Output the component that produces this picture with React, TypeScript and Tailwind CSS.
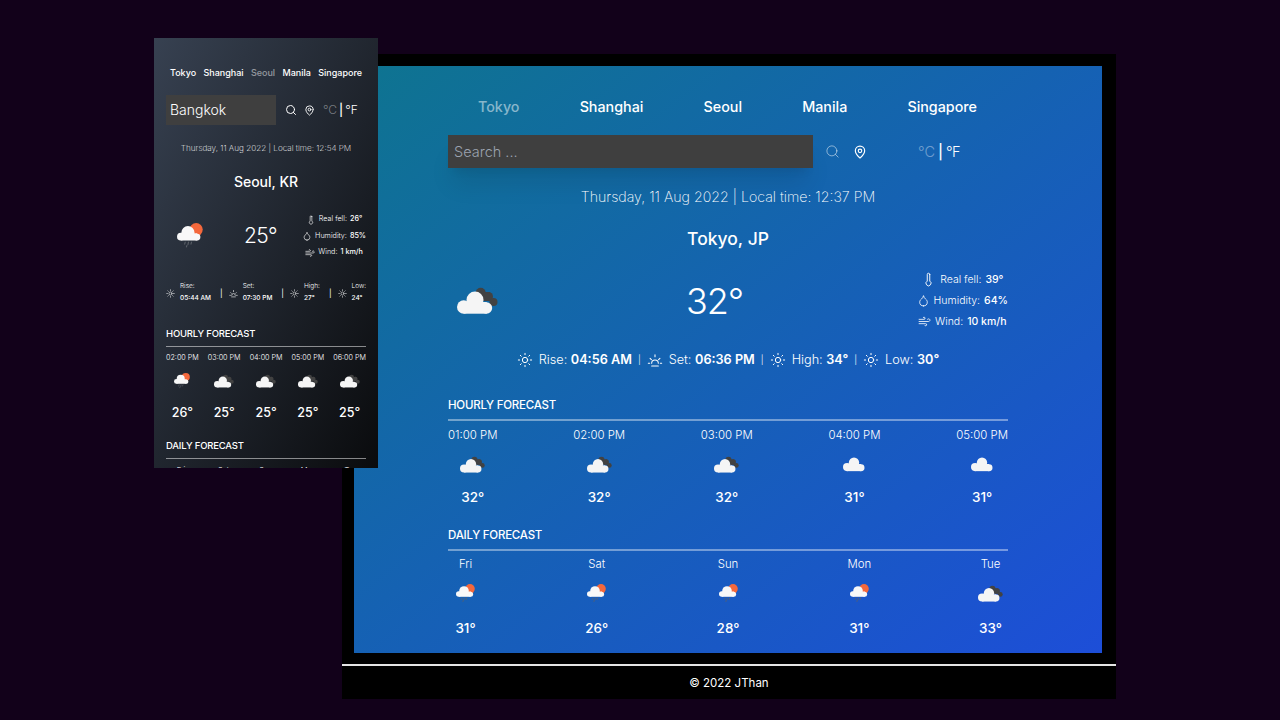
import React from 'react'
import { Search, MapPin, Thermometer, Droplet, Wind, Sun } from 'lucide-react'

function CloudDark({ className, plain }: { className: string; plain?: boolean }) {
    return (
        <svg viewBox={plain ? '0 2 36 26' : '0 0 41 27'} className={className}>
            {!plain && (
                <g fill="#424242">
                    <circle cx="23.7" cy="5.7" r="5" />
                    <circle cx="31.5" cy="9.5" r="4.5" />
                    <circle cx="36.5" cy="15" r="4" />
                    <rect x="24" y="5" width="9" height="9" />
                </g>
            )}
            <g fill="#f5f5f5">
                <circle cx="18" cy="13" r="8.5" />
                <circle cx="6.7" cy="20" r="6.7" />
                <circle cx="29.5" cy="21" r="5.7" />
                <rect x="6.7" y="15" width="23" height="11.7" />
            </g>
        </svg>
    )
}

function CloudSun({ className }: { className: string }) {
    return (
        <svg viewBox="0 0 19 19" className={className}>
            <circle cx="14" cy="4.8" r="4.8" fill="#f4683c" />
            <g fill="#f8f8f8">
                <circle cx="8" cy="7" r="4.8" />
                <circle cx="2.8" cy="10" r="2.8" />
                <circle cx="14.6" cy="10.3" r="2.5" />
                <rect x="2.8" y="7.5" width="12" height="5.3" />
            </g>
            <g stroke="#5b6068" strokeWidth="0.8" strokeLinecap="round">
                <path d="M6 14 5.6 15.4" />
                <path d="M8.4 14 8 15.8" />
                <path d="M10.6 14 10.2 15.4" />
                <path d="M7.2 16.5 6.9 17.5" />
            </g>
        </svg>
    )
}

function SunsetIcon({ className }: { className: string }) {
    return (
        <svg viewBox="0 0 24 24" fill="none" stroke="currentColor" strokeWidth="1.6" strokeLinecap="round" className={className}>
            <path d="M7 17a5 5 0 0 1 10 0" />
            <path d="M12 4v3M4.6 9.6l2 2M19.4 9.6l-2 2M2 17h2M20 17h2M7 21h10" />
        </svg>
    )
}

const hourlyBig = [
    { t: '01:00 PM', v: '32°', kind: 'dark' },
    { t: '02:00 PM', v: '32°', kind: 'dark' },
    { t: '03:00 PM', v: '32°', kind: 'dark' },
    { t: '04:00 PM', v: '31°', kind: 'plain' },
    { t: '05:00 PM', v: '31°', kind: 'plain' },
]
const dailyBig = [
    { t: 'Fri', v: '31°', kind: 'sun' },
    { t: 'Sat', v: '26°', kind: 'sun' },
    { t: 'Sun', v: '28°', kind: 'sun' },
    { t: 'Mon', v: '31°', kind: 'sun' },
    { t: 'Tue', v: '33°', kind: 'dark' },
]
const hourlySmall = [
    { t: '02:00 PM', v: '26°', sun: true },
    { t: '03:00 PM', v: '25°', sun: false },
    { t: '04:00 PM', v: '25°', sun: false },
    { t: '05:00 PM', v: '25°', sun: false },
    { t: '06:00 PM', v: '25°', sun: false },
]
const sunSmall = [
    { label: 'Rise:', v: '05:44 AM', set: false },
    { label: 'Set:', v: '07:30 PM', set: true },
    { label: 'High:', v: '27°', set: false },
    { label: 'Low:', v: '24°', set: false },
]

function BigForecast({ title, items, daily }: { title: string; items: typeof hourlyBig; daily?: boolean }) {
    return (
        <div>
            <div className="h-[18px] flex items-center text-[11.5px] font-medium tracking-[-0.02em] text-white">{title}</div>
            <div className="mt-[4px] h-[2px] bg-white/40" />
            <div className={`${daily ? 'mt-[6px]' : 'mt-[7px]'} flex justify-between text-white`}>
                {items.map((item, i) => (
                    <div key={i} className={`flex flex-col items-center ${daily ? 'w-[35px]' : ''}`}>
                        <div className="h-[16px] flex items-center text-[11.4px] font-light whitespace-nowrap">{item.t}</div>
                        <div className={`mt-[6px] flex items-center justify-center ${daily ? 'h-[28px]' : 'h-[28px]'}`}>
                            {item.kind === 'sun' && <CloudSun className="w-[19px] h-[19px]" />}
                            {item.kind === 'dark' && <CloudDark className="w-[25px] h-[17px]" />}
                            {item.kind === 'plain' && <CloudDark plain className="w-[22px] h-[16px]" />}
                        </div>
                        <div className={`${daily ? 'mt-[11px]' : 'mt-[9px]'} h-[20px] flex items-center text-[13.5px] font-medium`}>{item.v}</div>
                    </div>
                ))}
            </div>
        </div>
    )
}

export default function App() {
    return (
        <div className="relative w-[1280px] h-[720px] overflow-hidden bg-[#12011a] font-['Inter',sans-serif]">
            {/* desktop window */}
            <div className="absolute left-[342px] top-[54px] w-[774px] h-[645px] bg-black flex flex-col">
                <div className="mx-[12px] mt-[12px] h-[587px] w-[748px] px-[94px] pt-[30px] bg-linear-to-br/srgb from-[#0e7490] to-[#1d4ed8] text-white">
                    <div className="flex justify-between pl-[30px] pr-[31px] h-[22px] items-center text-[14.3px] font-medium">
                        <span className="text-white/50">Tokyo</span>
                        <span>Shanghai</span>
                        <span>Seoul</span>
                        <span>Manila</span>
                        <span>Singapore</span>
                    </div>
                    <div className="mt-[17px] h-[33px] flex items-center">
                        <input readOnly placeholder="Search ..." className="w-[365px] h-[33px] px-[6px] bg-[#3f3f3f] text-[14.5px] font-light shadow-xl placeholder:text-[#9ca3af] outline-none" />
                        <Search className="ml-[12px] w-[15px] h-[15px] text-white/50" strokeWidth={1.6} />
                        <MapPin className="ml-[13px] w-[14px] h-[14px]" strokeWidth={2} />
                        <div className="ml-[51px] flex items-center text-[14.5px] font-light">
                            <span className="text-white/40">°C</span>
                            <span className="ml-[3px] mr-[3px] font-medium">|</span>
                            <span className="tracking-[-0.05em]">°F</span>
                        </div>
                    </div>
                    <div className="mt-[17px] h-[24px] flex items-center justify-center text-[14.2px] font-extralight">
                        Thursday, 11 Aug 2022 | Local time: 12:37 PM
                    </div>
                    <div className="mt-[16px] h-[28px] flex items-center justify-center text-[17.5px] font-medium">Tokyo, JP</div>
                    <div className="mt-[16px] h-[63px] flex items-center">
                        <CloudDark className="ml-[9px] w-[41px] h-[27px]" />
                        <div className="ml-[188px] text-[36px] font-light tracking-[-0.03em]">32°</div>
                        <div className="ml-auto flex flex-col items-center text-[10.5px] font-light">
                            <div className="h-[21px] flex items-center gap-[4px]"><Thermometer className="w-[15px] h-[15px]" strokeWidth={1.5} />Real fell: <span className="font-medium">39°</span></div>
                            <div className="h-[21px] flex items-center gap-[4px]"><Droplet className="w-[13px] h-[13px]" strokeWidth={1.5} />Humidity: <span className="font-medium">64%</span></div>
                            <div className="h-[21px] flex items-center gap-[4px]"><Wind className="w-[13px] h-[13px]" strokeWidth={1.5} />Wind: <span className="font-medium">10 km/h</span></div>
                        </div>
                    </div>
                    <div className="mt-[18px] h-[20px] flex items-center justify-center text-[12.7px] font-light">
                        <Sun className="w-[16px] h-[16px] mr-[6px]" strokeWidth={1.5} />Rise:&nbsp;<span className="font-semibold">04:56 AM</span>
                        <span className="mx-[6px] text-[9px]">|</span>
                        <SunsetIcon className="w-[16px] h-[16px] mr-[6px]" />Set:&nbsp;<span className="font-semibold">06:36 PM</span>
                        <span className="mx-[6px] text-[9px]">|</span>
                        <Sun className="w-[16px] h-[16px] mr-[6px]" strokeWidth={1.5} />High:&nbsp;<span className="font-semibold">34°</span>
                        <span className="mx-[6px] text-[9px]">|</span>
                        <Sun className="w-[16px] h-[16px] mr-[6px]" strokeWidth={1.5} />Low:&nbsp;<span className="font-semibold">30°</span>
                    </div>
                    <div className="mt-[27px]">
                        <BigForecast title="HOURLY FORECAST" items={hourlyBig} />
                    </div>
                    <div className="mt-[20px]">
                        <BigForecast title="DAILY FORECAST" items={dailyBig} daily />
                    </div>
                </div>
                <div className="mt-[11px] h-[2px] bg-[#e5e5e5]" />
                <div className="flex-1 pt-[2px] flex items-center justify-center text-[11.5px] text-white">© 2022 JThan</div>
            </div>

            {/* mobile window */}
            <div className="absolute left-[154px] top-[38px] w-[224px] h-[430px] overflow-hidden px-[12px] pt-[29px] bg-linear-to-br/srgb from-[#374151] to-[#0a0b0d] text-white">
                <div className="h-[12px] flex justify-between px-[4px] items-center text-[9px] font-medium">
                    <span>Tokyo</span>
                    <span>Shanghai</span>
                    <span className="text-white/50">Seoul</span>
                    <span>Manila</span>
                    <span>Singapore</span>
                </div>
                <div className="mt-[16px] h-[30px] flex items-center">
                    <input readOnly value="Bangkok" className="w-[110px] h-[30px] px-[4px] pb-[2px] bg-[#3f3f3f] text-[14px] font-light text-white outline-none" />
                    <Search className="ml-[9px] w-[12px] h-[12px]" strokeWidth={2} />
                    <MapPin className="ml-[7px] w-[11px] h-[11px]" strokeWidth={2} />
                    <div className="ml-[8px] flex items-center text-[12px] font-light">
                        <span className="text-white/40">°C</span>
                        <span className="mx-[2px] font-medium">|</span>
                        <span>°F</span>
                    </div>
                </div>
                <div className="mt-[16px] h-[14px] flex items-center justify-center text-[8.2px] font-extralight whitespace-nowrap">
                    Thursday, 11 Aug 2022 | Local time: 12:54 PM
                </div>
                <div className="mt-[16px] h-[20px] flex items-center justify-center text-[14px] font-medium">Seoul, KR</div>
                <div className="mt-[20px] h-[50px] flex items-center">
                    <CloudSun className="ml-[11px] w-[26px] h-[26px]" />
                    <div className="ml-[41px] text-[21px] font-light tracking-[-0.03em]">25°</div>
                    <div className="ml-auto flex flex-col items-center text-[7.2px] font-light whitespace-nowrap">
                        <div className="h-[16.5px] flex items-center gap-[3px]"><Thermometer className="w-[10px] h-[10px]" strokeWidth={1.5} />Real fell: <span className="font-medium">26°</span></div>
                        <div className="h-[16.5px] flex items-center gap-[3px]"><Droplet className="w-[10px] h-[10px]" strokeWidth={1.5} />Humidity: <span className="font-medium">85%</span></div>
                        <div className="h-[16.5px] flex items-center gap-[3px]"><Wind className="w-[10px] h-[10px]" strokeWidth={1.5} />Wind: <span className="font-medium">1 km/h</span></div>
                    </div>
                </div>
                <div className="mt-[19px] h-[26px] flex items-center text-[6.5px] whitespace-nowrap">
                    {sunSmall.map((s, i) => (
                        <React.Fragment key={s.label}>
                            {i > 0 && <span className="ml-[9px] mr-[6px] text-[8px]">|</span>}
                            <div className="flex items-center gap-[5px]">
                                {s.set ? <SunsetIcon className="w-[9px] h-[9px]" /> : <Sun className="w-[9px] h-[9px]" strokeWidth={1.5} />}
                                <div className="flex flex-col gap-[2px]">
                                    <span className="font-light">{s.label}</span>
                                    <span className="font-medium">{s.v}</span>
                                </div>
                            </div>
                        </React.Fragment>
                    ))}
                </div>
                <div className="mt-[21px] h-[14px] flex items-center text-[9.5px] font-medium tracking-[-0.02em]">HOURLY FORECAST</div>
                <div className="mt-[5px] h-[1px] bg-white/50" />
                <div className="mt-[5px] flex justify-between">
                    {hourlySmall.map((h) => (
                        <div key={h.t} className="flex flex-col items-center">
                            <div className="h-[12px] flex items-center text-[7.2px] font-light whitespace-nowrap">{h.t}</div>
                            <div className="mt-[5px] h-[24px] flex items-center justify-center">
                                {h.sun ? <CloudSun className="w-[16px] h-[16px]" /> : <CloudDark className="w-[20px] h-[14px]" />}
                            </div>
                            <div className="mt-[13px] h-[14px] flex items-center text-[12.5px] font-medium">{h.v}</div>
                        </div>
                    ))}
                </div>
                <div className="mt-[19px] h-[14px] flex items-center text-[9.5px] font-medium tracking-[-0.02em]">DAILY FORECAST</div>
                <div className="mt-[5px] h-[1px] bg-white/50" />
                <div className="mt-[6px] flex justify-between px-[5px] text-[7.5px] font-light">
                    <span className="w-[20px] text-center">Fri</span>
                    <span className="w-[20px] text-center">Sat</span>
                    <span className="w-[20px] text-center">Sun</span>
                    <span className="w-[20px] text-center">Mon</span>
                    <span className="w-[20px] text-center">Tue</span>
                </div>
            </div>
        </div>
    )
}
